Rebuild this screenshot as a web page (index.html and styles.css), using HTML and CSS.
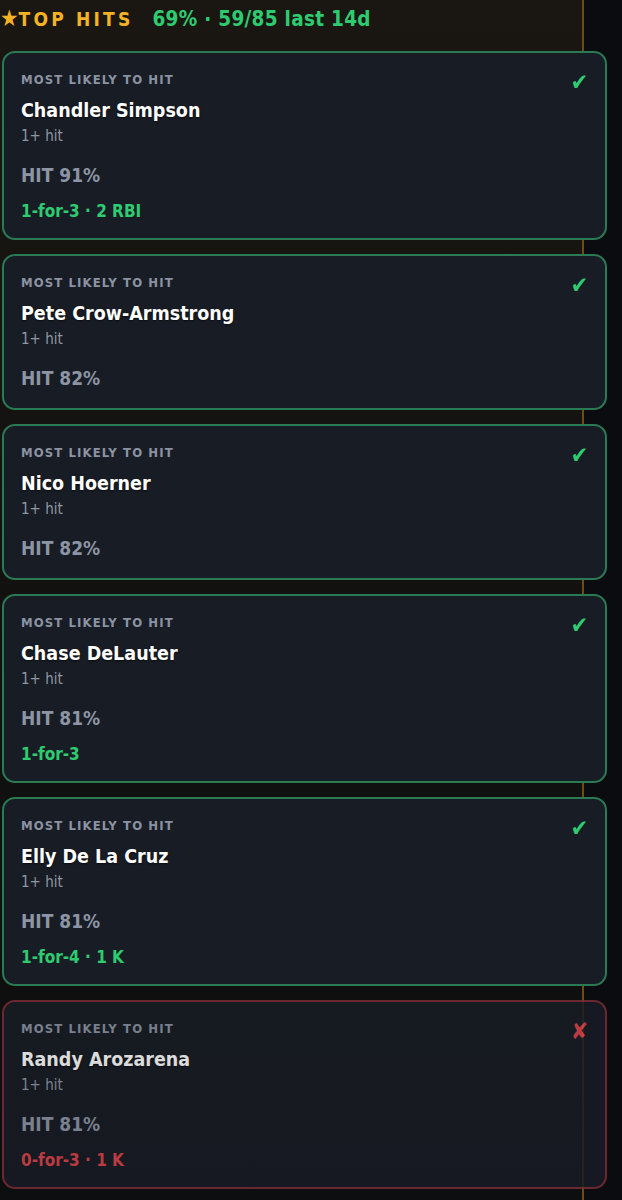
FILE: index.html
```html
<!DOCTYPE html>
<html lang="en">
  <head>
    <meta charset="UTF-8" />
    <meta name="viewport" content="width=device-width, initial-scale=1.0" />
    <title>Top Hits</title>
    <link rel="stylesheet" href="styles.css">
  </head>
  <body>
    <div class="panel">
      <h2 class="heading">
        <span class="heading-title"><span class="heading-star">&#9733;</span>TOP HITS</span>
        <span class="heading-stat">69% · 59/85 last 14d</span>
      </h2>

      <div class="pick-list">
        <div class="pick pick-hit">
          <span class="pick-mark">&#10004;</span>
          <div class="pick-label">MOST LIKELY TO HIT</div>
          <div class="pick-name">Chandler Simpson</div>
          <div class="pick-prop">1+ hit</div>
          <div class="pick-odds">HIT 91%</div>
          <div class="pick-result">1-for-3 · 2 RBI</div>
        </div>

        <div class="pick pick-hit">
          <span class="pick-mark">&#10004;</span>
          <div class="pick-label">MOST LIKELY TO HIT</div>
          <div class="pick-name">Pete Crow-Armstrong</div>
          <div class="pick-prop">1+ hit</div>
          <div class="pick-odds">HIT 82%</div>
        </div>

        <div class="pick pick-hit">
          <span class="pick-mark">&#10004;</span>
          <div class="pick-label">MOST LIKELY TO HIT</div>
          <div class="pick-name">Nico Hoerner</div>
          <div class="pick-prop">1+ hit</div>
          <div class="pick-odds">HIT 82%</div>
        </div>

        <div class="pick pick-hit">
          <span class="pick-mark">&#10004;</span>
          <div class="pick-label">MOST LIKELY TO HIT</div>
          <div class="pick-name">Chase DeLauter</div>
          <div class="pick-prop">1+ hit</div>
          <div class="pick-odds">HIT 81%</div>
          <div class="pick-result">1-for-3</div>
        </div>

        <div class="pick pick-hit">
          <span class="pick-mark">&#10004;</span>
          <div class="pick-label">MOST LIKELY TO HIT</div>
          <div class="pick-name">Elly De La Cruz</div>
          <div class="pick-prop">1+ hit</div>
          <div class="pick-odds">HIT 81%</div>
          <div class="pick-result">1-for-4 · 1 K</div>
        </div>

        <div class="pick pick-miss">
          <span class="pick-mark">&#10008;</span>
          <div class="pick-label">MOST LIKELY TO HIT</div>
          <div class="pick-name">Randy Arozarena</div>
          <div class="pick-prop">1+ hit</div>
          <div class="pick-odds">HIT 81%</div>
          <div class="pick-result">0-for-3 · 1 K</div>
        </div>
      </div>
    </div>
  </body>
</html>
```

FILE: styles.css
```css
* {
  padding: 0;
  margin: 0;
  box-sizing: border-box;
}

body {
  font-family: "DejaVu Sans Condensed", "DejaVu Sans", sans-serif;
  background-color: #0b0c10;
  overflow: hidden;
}

.panel {
  width: 584px;
  min-height: 1200px;
  background: linear-gradient(#1a1712, #121110 55%, #0d0e10);
  border-right: 2px solid #6e4c16;
}

.heading {
  display: flex;
  align-items: baseline;
  gap: 19px;
  height: 38px;
  padding-top: 6px;
  line-height: 24px;
  font-weight: bold;
}

.heading-title {
  color: #f5b324;
  font-size: 19px;
  letter-spacing: 3.2px;
}

.heading-star {
  font-size: 23px;
  letter-spacing: 0;
}

.heading-stat {
  color: #2ecc71;
  font-size: 20.5px;
  letter-spacing: 0.3px;
}

.pick-list {
  width: 605px;
  margin-left: 2px;
  padding-top: 13px;
  display: flex;
  flex-direction: column;
  gap: 14px;
}

.pick {
  position: relative;
  background-color: #181c24;
  border: 2px solid #2a7a54;
  border-radius: 13px;
  padding: 18px 18px 18px 17px;
}

.pick-miss {
  border-color: #7c2d36;
  opacity: 0.85;
}

.pick-mark {
  position: absolute;
  top: 16px;
  right: 17px;
  font-size: 23px;
  line-height: 26px;
  color: #2ecc71;
}

.pick-miss .pick-mark {
  color: #d9434b;
}

.pick-label {
  font-size: 13px;
  line-height: 18px;
  font-weight: bold;
  letter-spacing: 1.1px;
  color: #8b93a3;
}

.pick-name {
  margin-top: 9px;
  font-size: 19.5px;
  line-height: 26px;
  font-weight: bold;
  color: #ffffff;
  text-shadow: 0 1px 2px rgba(0, 0, 0, 0.6);
}

.pick-prop {
  margin-top: 2px;
  font-size: 15px;
  line-height: 20px;
  color: #9097a4;
}

.pick-odds {
  margin-top: 17px;
  font-size: 19px;
  line-height: 24px;
  font-weight: bold;
  color: #8d95a5;
}

.pick-result {
  margin-top: 16px;
  font-size: 17px;
  line-height: 17px;
  font-weight: bold;
  color: #2ecc71;
}

.pick-miss .pick-result {
  color: #d9434b;
}
```
